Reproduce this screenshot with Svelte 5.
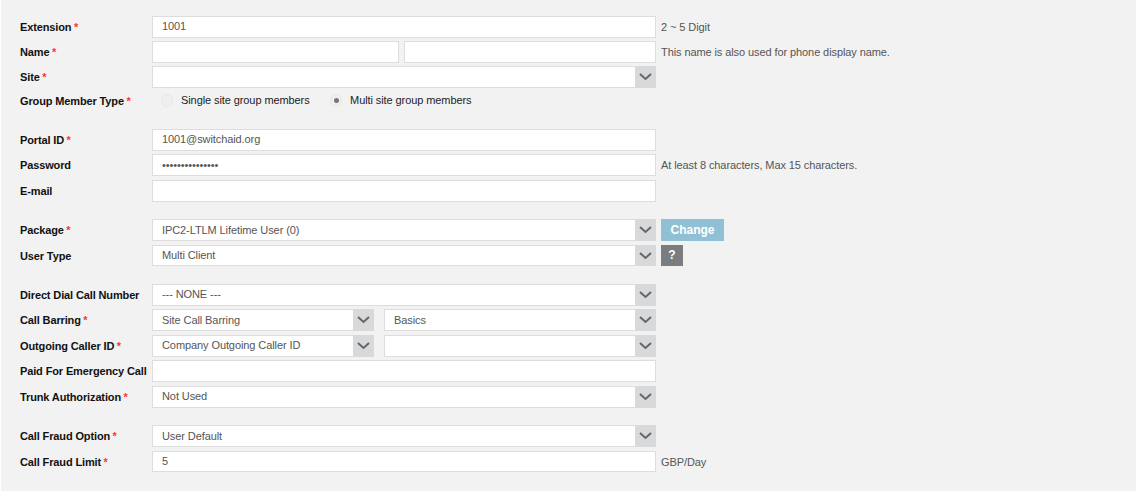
<script>
  const chev = 'M1 1 L6.5 6 L12 1';
</script>

{#snippet arrow()}
  <span class="arrow"><svg width="13" height="8" viewBox="0 0 13 8"><path d={chev} /></svg></span>
{/snippet}
{#snippet sel(text, cls = 'full')}
  <div class="field sel {cls}"><span class="val">{text}</span>{@render arrow()}</div>
{/snippet}
{#snippet inp(text, cls = 'full')}
  <div class="field {cls}"><span class="val">{text}</span></div>
{/snippet}
{#snippet label(text, req = true)}
  <div class="label">{text}{#if req}<span class="req">*</span>{/if}</div>
{/snippet}

<div class="panel">
  <section class="sec1">
    <div class="row">{@render label('Extension')}{@render inp('1001')}<span class="hint">2 ~ 5 Digit</span></div>
    <div class="row">{@render label('Name')}<div class="pair name">{@render inp('', 'first')}{@render inp('', 'last')}</div><span class="hint">This name is also used for phone display name.</span></div>
    <div class="row">{@render label('Site')}{@render sel('')}</div>
    <div class="row radio-row">{@render label('Group Member Type')}
      <div class="radios">
        <span class="radio"></span><span class="rtext first">Single site group members</span>
        <span class="radio on"></span><span class="rtext second">Multi site group members</span>
      </div>
    </div>
  </section>
  <section>
    <div class="row">{@render label('Portal ID')}{@render inp('1001@switchaid.org')}</div>
    <div class="row">{@render label('Password', false)}{@render inp('•••••••••••••••', 'full pw')}<span class="hint">At least 8 characters, Max 15 characters.</span></div>
    <div class="row">{@render label('E-mail', false)}{@render inp('')}</div>
  </section>
  <section>
    <div class="row">{@render label('Package')}{@render sel('IPC2-LTLM Lifetime User (0)')}<button class="change">Change</button></div>
    <div class="row">{@render label('User Type', false)}{@render sel('Multi Client')}<button class="help">?</button></div>
  </section>
  <section>
    <div class="row">{@render label('Direct Dial Call Number', false)}{@render sel('--- NONE ---')}</div>
    <div class="row">{@render label('Call Barring')}<div class="pair split">{@render sel('Site Call Barring', 'first')}{@render sel('Basics', 'last')}</div></div>
    <div class="row">{@render label('Outgoing Caller ID')}<div class="pair split">{@render sel('Company Outgoing Caller ID', 'first')}{@render sel('', 'last')}</div></div>
    <div class="row">{@render label('Paid For Emergency Call', false)}{@render inp('')}</div>
    <div class="row">{@render label('Trunk Authorization')}{@render sel('Not Used')}</div>
  </section>
  <section>
    <div class="row">{@render label('Call Fraud Option')}{@render sel('User Default')}</div>
    <div class="row">{@render label('Call Fraud Limit')}{@render inp('5')}<span class="hint">GBP/Day</span></div>
  </section>
</div>

<style>
  :global(body) { margin: 0; background: #fff; }
  .panel {
    box-sizing: border-box;
    width: 1135px;
    height: 491px;
    margin-left: 1px;
    padding: 16px 0 0 19px;
    background: #f2f2f2;
    font-family: "Liberation Sans", Arial, sans-serif;
    font-size: 11px;
    letter-spacing: -0.09px;
    display: flex;
    flex-direction: column;
    gap: 17.6px;
  }
  section { display: flex; flex-direction: column; gap: 3.8px; }
  .sec1 { gap: 3.5px; margin-bottom: -0.2px; }
  .row { display: flex; align-items: center; height: 21.7px; }
  .radio-row { margin-top: -1.7px; }
  .label { width: 132px; flex: none; font-weight: bold; color: #111; white-space: nowrap; letter-spacing: -0.13px; }
  .req { color: #f33; font-weight: bold; margin-left: 2.5px; }
  .field {
    box-sizing: border-box;
    height: 21.7px;
    align-self: flex-start;
    background: #fff;
    border: 1px solid #ddd;
    display: flex;
    align-items: center;
    color: #555;
    position: relative;
    flex: none;
  }
  .val { padding-left: 9px; position: relative; top: -0.5px; }
  .full { width: 504px; }
  .pw .val { letter-spacing: -0.1px; }
  .pair { display: flex; width: 504px; flex: none; justify-content: space-between; }
  .name .first { width: 247px; }
  .name .last { width: 252px; }
  .split .first { width: 222px; }
  .split .last { width: 272px; }
  .arrow {
    position: absolute;
    top: -1px; right: -1px; bottom: -1px;
    width: 21px;
    background: #d8d9da;
    display: flex;
    align-items: center;
    justify-content: center;
  }
  .arrow svg { display: block; }
  .arrow path { fill: none; stroke: #666; stroke-width: 2; }
  .hint { margin-left: 5px; color: #555; white-space: nowrap; }
  .radios { display: flex; align-items: center; padding-left: 9px; color: #222; }
  .radio {
    box-sizing: border-box;
    width: 12px; height: 13px;
    border-radius: 50%;
    background: #efefef;
    border: 1px solid #e6e6e6;
    position: relative;
    flex: none;
  }
  .radio.on::after {
    content: '';
    position: absolute;
    left: 2.5px; top: 3px;
    width: 5px; height: 5px;
    border-radius: 50%;
    background: #777;
  }
  .rtext { margin-left: 8px; position: relative; top: -1px; }
  .rtext.first { margin-right: 20.5px; }
  button {
    border: 0;
    padding: 0;
    margin-left: 5px;
    font-family: inherit;
    font-weight: bold;
    color: #fff;
    flex: none;
    align-self: flex-start;
  }
  .change { width: 63px; height: 22px; background: #8fc0d4; font-size: 12px; }
  .help { width: 22px; height: 21px; background: #7b7c80; font-size: 12px; }
</style>
